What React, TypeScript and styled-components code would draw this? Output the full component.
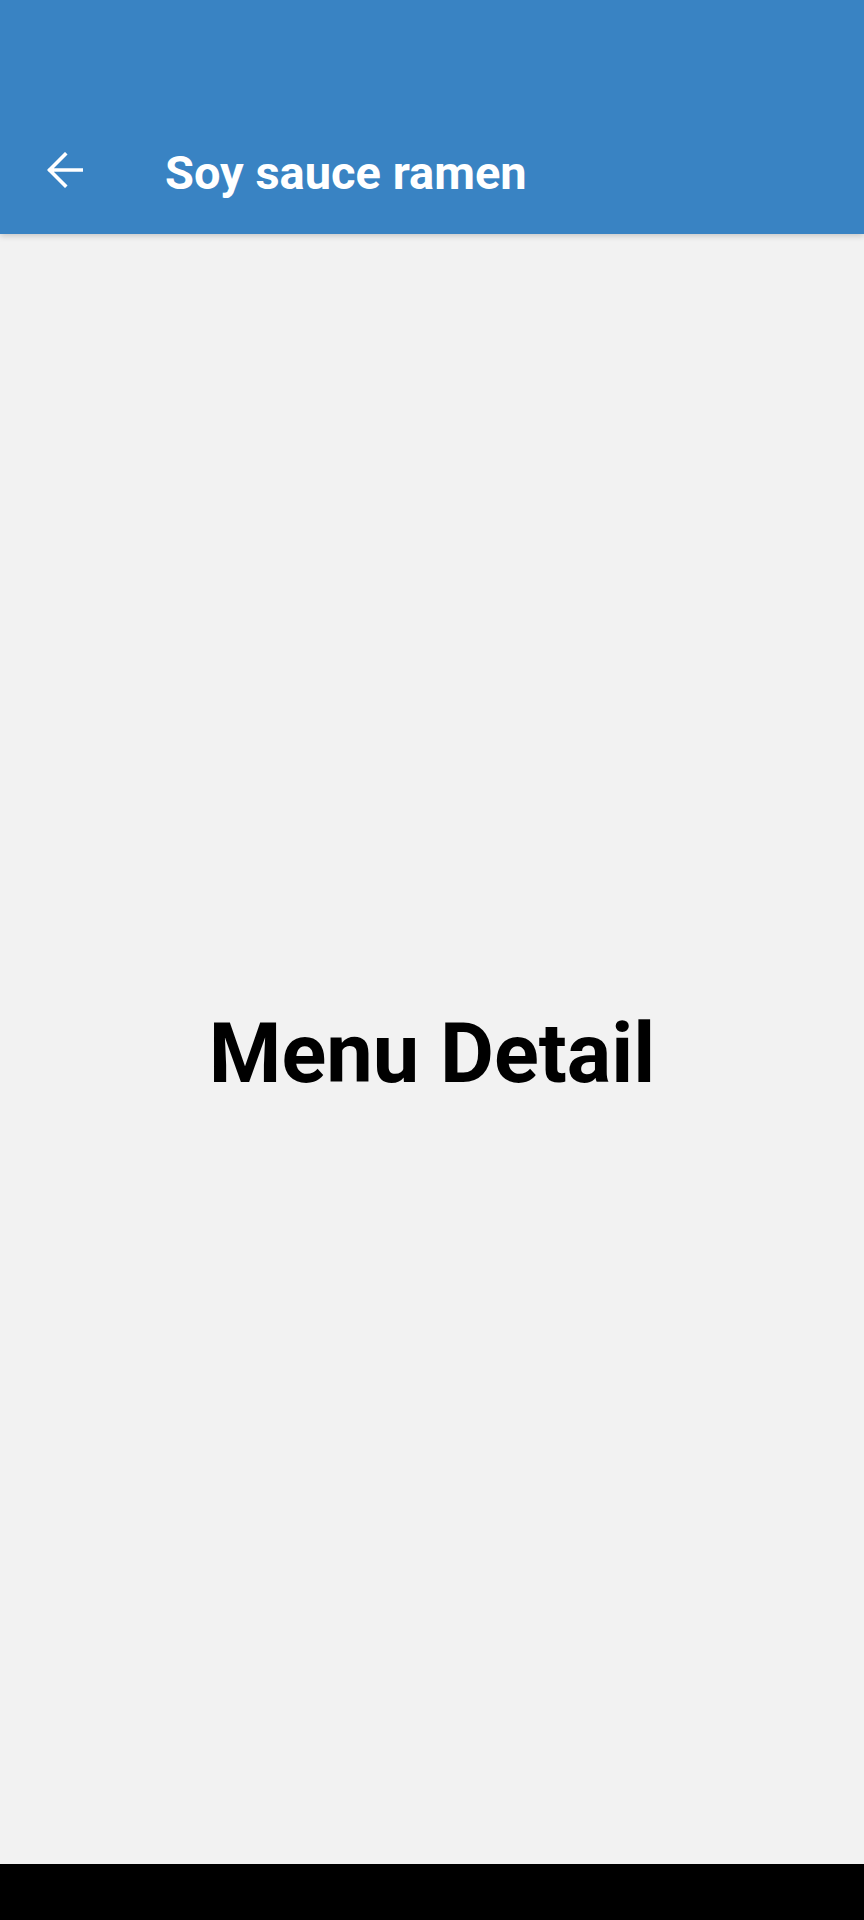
import styled, { createGlobalStyle } from "styled-components";

const GlobalStyle = createGlobalStyle`
  html, body {
    margin: 0;
    padding: 0;
    background: #f2f2f2;
  }
  * {
    box-sizing: border-box;
  }
`;

const Screen = styled.div`
  width: 864px;
  height: 1920px;
  display: flex;
  flex-direction: column;
  background: #f2f2f2;
  font-family: Roboto, "Liberation Sans", sans-serif;
  overflow: hidden;
`;

const Header = styled.header`
  position: relative;
  z-index: 1;
  height: 234px;
  padding-top: 106px;
  background: #3983c3;
  box-shadow: 0 2px 6px rgba(0, 0, 0, 0.18);
`;

const Toolbar = styled.div`
  height: 128px;
  display: flex;
  align-items: center;
`;

const BackButton = styled.button`
  width: 130px;
  height: 100%;
  padding: 0 0 0 47px;
  border: none;
  background: transparent;
  display: flex;
  align-items: center;
  cursor: pointer;
`;

const Title = styled.h1`
  margin: 4px 0 0 35px;
  font-size: 47px;
  font-weight: 700;
  color: #ffffff;
`;

const Content = styled.main`
  flex: 1;
  display: flex;
  align-items: center;
  justify-content: center;
`;

const Heading = styled.h2`
  margin: 8px 0 0 0;
  font-size: 83px;
  font-weight: 700;
  color: #000000;
`;

const NavBar = styled.div`
  height: 56px;
  background: #000000;
`;

const BackIcon = () => (
  <svg width="36" height="36" viewBox="0 0 36 36" fill="none">
    <path
      d="M35 18H3M18 2.5L2.5 18L18 33.5"
      stroke="#ffffff"
      strokeWidth="3.6"
      strokeLinecap="square"
    />
  </svg>
);

const App = () => {
  return (
    <>
      <GlobalStyle />
      <Screen>
        <Header>
          <Toolbar>
            <BackButton aria-label="Back">
              <BackIcon />
            </BackButton>
            <Title>Soy sauce ramen</Title>
          </Toolbar>
        </Header>
        <Content>
          <Heading>Menu Detail</Heading>
        </Content>
        <NavBar />
      </Screen>
    </>
  );
};

export default App;
